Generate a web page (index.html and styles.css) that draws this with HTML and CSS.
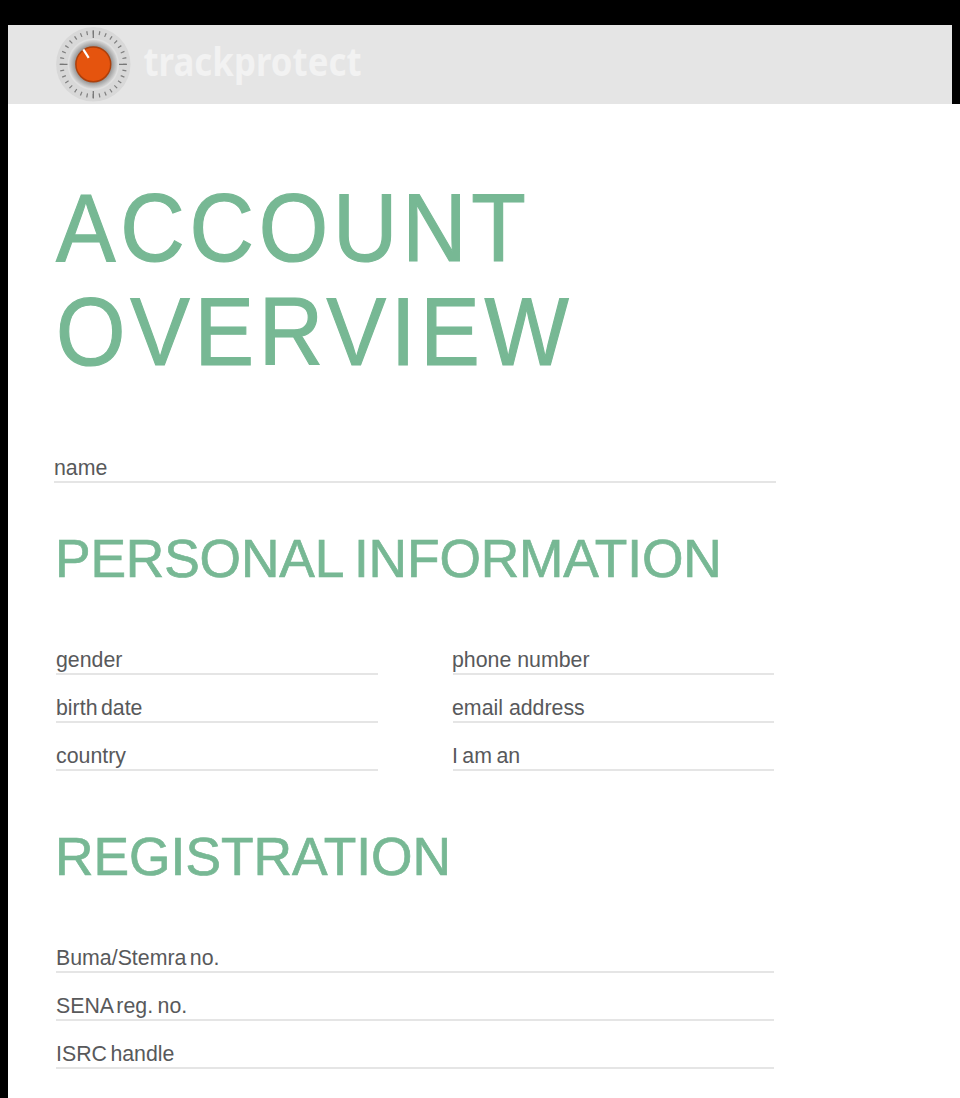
FILE: index.html
```html
<!DOCTYPE html>
<html lang="en">
<head>
<meta charset="utf-8">
<title>Account overview</title>
<link rel="stylesheet" href="styles.css">
</head>
<body>
<header class="header">
  <svg class="logo" width="320" height="79" viewBox="48 25 320 79" role="img" aria-label="trackprotect">
    <defs>
      <radialGradient id="shade">
        <stop offset="0" stop-color="#777"/>
        <stop offset=".7" stop-color="#8c8c8c"/>
        <stop offset=".85" stop-color="#b4b4b4"/>
        <stop offset="1" stop-color="#dadada"/>
      </radialGradient>
    </defs>
    <circle cx="93.3" cy="64.3" r="37.2" fill="#d8d8d8"/>
    <circle cx="93.3" cy="64.3" r="25.8" fill="#e0e0e0"/>
    <circle cx="93.3" cy="64.3" r="31.7" fill="none" stroke="#808080" stroke-width="4" stroke-dasharray="2 8" stroke-dashoffset="1" pathLength="320"/>
    <path d="M93.3 30.5v7.500M93.3 91v7.500M60 64.3h7.500M119 64.3h7.500" stroke="#777" stroke-width="1.3"/>
    <circle cx="93.3" cy="64.3" r="24.5" fill="url(#shade)"/>
    <circle cx="93.3" cy="64.3" r="17.4" fill="#e5540e" stroke="#ae3f0a" stroke-width="1.5"/>
    <path d="M83.3 49.300l5.400 8.500" stroke="#fff" stroke-width="2.2"/>
    <text class="wordmark" x="143.500" y="76" textLength="218" lengthAdjust="spacingAndGlyphs">trackprotect</text>
  </svg>
</header>
<main class="page">
  <h1 class="title">ACCOUNT<br>OVERVIEW</h1>
  <div class="field field-name">name</div>
  <h2 class="heading heading-personal">PERSONAL INFORMATION</h2>
  <div class="columns">
    <div class="column">
      <div class="field">gender</div>
      <div class="field narrow-space">birth date</div>
      <div class="field">country</div>
    </div>
    <div class="column column-right">
      <div class="field">phone number</div>
      <div class="field">email address</div>
      <div class="field tight">I am an</div>
    </div>
  </div>
  <h2 class="heading heading-registration">REGISTRATION</h2>
  <div class="registration">
    <div class="field narrow-space">Buma/Stemra no.</div>
    <div class="field registry"><span class="narrow-space">SENA </span>reg. no.</div>
    <div class="field narrow-space">ISRC handle</div>
  </div>
</main>
</body>
</html>
```
FILE: styles.css
```css
* { box-sizing: border-box; }
html { background: #000; }
body {
  margin: 0;
  padding: 25px 8px 0;
  height: 1098px;
  overflow: hidden;
  background: #000;
  font-family: "Liberation Sans", Arial, sans-serif;
}
.header {
  height: 79px;
  padding-left: 40px;
  background: #e5e5e5;
}
.logo { display: block; overflow: visible; }
.wordmark {
  font: bold 39px "Noto Sans", "Open Sans", sans-serif;
  fill: #f2f2f2;
}
.page {
  height: 994px;
  margin-right: -8px;
  padding: 72px 0 0 46px;
  background: #fff;
}
.title {
  margin: 0 0 0 2px;
  font-size: 96px;
  font-weight: 400;
  line-height: 104px;
  color: #77b894;
  letter-spacing: 5.1px;
  transform: scaleX(0.93);
  transform-origin: left top;
  -webkit-text-stroke: 1.2px #77b894;
}
.heading {
  margin: 0 0 0 1px;
  font-size: 53.33px;
  font-weight: 400;
  line-height: 60px;
  color: #77b894;
  white-space: nowrap;
  -webkit-text-stroke: 0.7px #77b894;
}
.field {
  height: 48px;
  padding-top: 21px;
  border-bottom: 2px solid #e5e5e5;
  font-size: 21.33px;
  line-height: 24px;
  color: #58595b;
  white-space: nowrap;
}
.field-name {
  width: 722px;
  margin-top: 51px;
}
.column-right .field { text-indent: -1px; }
.narrow-space { word-spacing: -2.5px; }
.tight { word-spacing: -1.5px; }
.registry { word-spacing: -1.5px; }
.heading-personal {
  margin-top: 46px;
  letter-spacing: -0.15px;
  word-spacing: -3px;
}
.columns {
  display: grid;
  grid-template-columns: 322px 321px;
  column-gap: 75px;
  margin: 38px 0 0 2px;
}
.heading-registration { margin-top: 56px; }
.registration {
  width: 718px;
  margin: 38px 0 0 2px;
}
```
